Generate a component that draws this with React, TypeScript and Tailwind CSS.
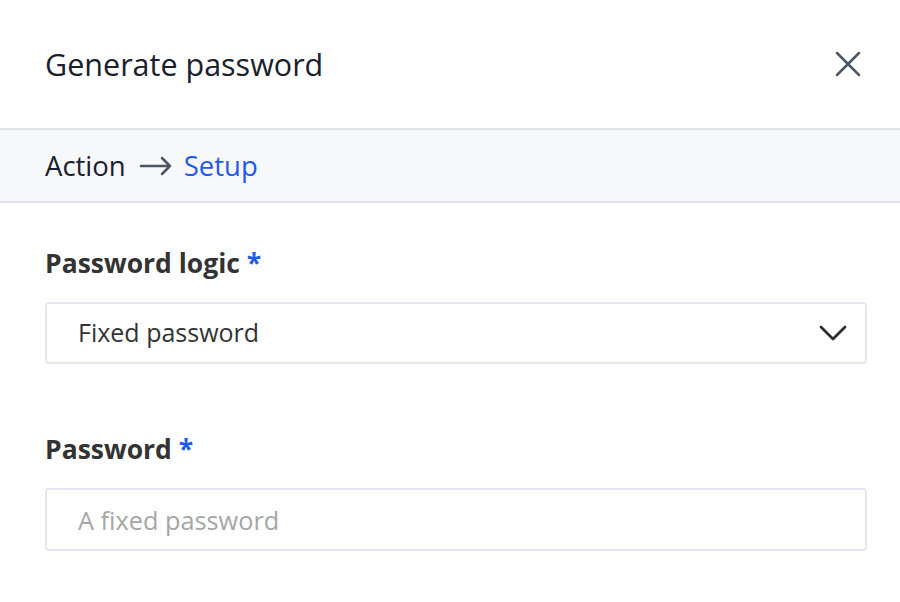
const font = { fontFamily: "'Open Sans', Lato, sans-serif" };

function Field({ label, children }: { label: string; children: React.ReactNode }) {
  return (
    <div className="flex flex-col">
      <label className="text-[26.5px] font-bold leading-[26px] text-[#333333]">
        {label} <span className="text-[#1f5af0]">*</span>
      </label>
      <div className="mt-[26px]">{children}</div>
    </div>
  );
}

export default function App() {
  return (
    <div className="h-[602px] w-[900px] overflow-hidden bg-white" style={font}>
      <div className="flex h-[128px] items-center justify-between pl-[45px] pr-[39px]">
        <h2 className="text-[30.5px] font-medium leading-none text-[#1a202c]">Generate password</h2>
        <button className="text-[#4b5563]">
          <svg width="26" height="26" viewBox="0 0 26 26" fill="none" stroke="currentColor" strokeWidth="2.5" strokeLinecap="round">
            <path d="M2 2l22 22M24 2L2 24" />
          </svg>
        </button>
      </div>
      <div className="flex h-[75px] items-center border-y-2 border-[#dde1e8] bg-[#f7f8fc] px-[45px] text-[27.5px] leading-none">
        <span className="text-[#1a202c]">Action</span>
        <svg width="34" height="20" viewBox="0 0 34 20" fill="none" stroke="#4b5563" strokeWidth="2.5" strokeLinecap="round" strokeLinejoin="round" className="ml-[13px] mr-[11px]">
          <path d="M2 10h29M23 2l8 8-8 8" />
        </svg>
        <span className="text-[#1f5af0]">Setup</span>
      </div>
      <div className="flex flex-col gap-[72px] pl-[45px] pr-[33px] pt-[47px]">
        <Field label="Password logic">
          <div className="flex h-[62px] items-center justify-between rounded border-2 border-[#e4e7f1] pl-[31px] pr-[18px]">
            <span className="text-[25px] text-[#333333]">Fixed password</span>
            <svg width="28" height="16" viewBox="0 0 28 16" fill="none" stroke="#2d2d2d" strokeWidth="2.75" strokeLinecap="round" strokeLinejoin="round">
              <path d="M2 2l12 12L26 2" />
            </svg>
          </div>
        </Field>
        <Field label="Password">
          <input
            placeholder="A fixed password"
            className="h-[63px] w-full rounded border-2 border-[#e4e7f1] pl-[31px] text-[25.3px] text-[#333333] outline-none placeholder:text-[#a6a6a6]"
          />
        </Field>
      </div>
    </div>
  );
}
